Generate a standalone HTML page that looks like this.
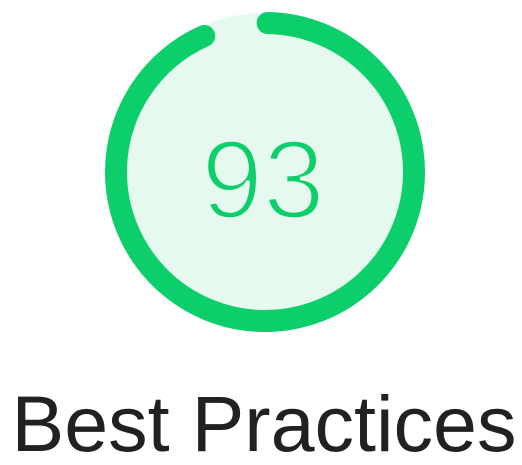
<!DOCTYPE html>
<html><head><style>
html,body{margin:0;padding:0;background:#fff;width:522px;height:465px;overflow:hidden}
</style></head><body>
<svg width="522" height="465" xmlns="http://www.w3.org/2000/svg" style="position:absolute;left:0;top:0">
<circle cx="265" cy="172" r="159" fill="#e5f9ef"/>
<circle cx="265" cy="172" r="149" fill="none" stroke="#0cce6b" stroke-width="22" stroke-linecap="round"
 stroke-dasharray="870.6 1000" transform="rotate(-89 265 172)"/>
<text x="263" y="218" text-anchor="middle" font-family="Liberation Sans, sans-serif" font-size="111" fill="#0cce6b" stroke="#e5f9ef" stroke-width="3.5" style="paint-order:fill">93</text>
<text x="264" y="451" text-anchor="middle" font-family="Liberation Sans, sans-serif" font-size="79" fill="#212121">Best Practices</text>
</svg>
</body></html>
